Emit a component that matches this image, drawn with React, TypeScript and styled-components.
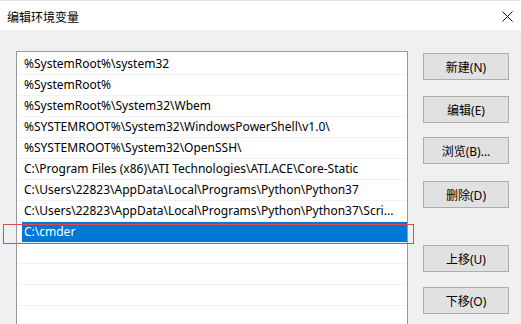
import React from 'react';
import styled, { createGlobalStyle } from 'styled-components';

const paths = [
  '%SystemRoot%\\system32',
  '%SystemRoot%',
  '%SystemRoot%\\System32\\Wbem',
  '%SYSTEMROOT%\\System32\\WindowsPowerShell\\v1.0\\',
  '%SYSTEMROOT%\\System32\\OpenSSH\\',
  'C:\\Program Files (x86)\\ATI Technologies\\ATI.ACE\\Core-Static',
  'C:\\Users\\22823\\AppData\\Local\\Programs\\Python\\Python37',
  'C:\\Users\\22823\\AppData\\Local\\Programs\\Python\\Python37\\Scri...',
  'C:\\cmder',
  '',
  '',
  '',
  '',
];

const SELECTED = 8;

const buttons = [
  { label: '新建(N)', gap: 0 },
  { label: '编辑(E)', gap: 16 },
  { label: '浏览(B)...', gap: 14 },
  { label: '删除(D)', gap: 17 },
  { label: '上移(U)', gap: 37 },
  { label: '下移(O)', gap: 15 },
];

export default function App() {
  return (
    <>
      <GlobalStyle />
      <Window>
        <TitleBar>
          <Title>编辑环境变量</Title>
          <CloseIcon width="11" height="11" viewBox="0 0 11 11">
            <path d="M0.5 0.5 L10.5 10.5 M10.5 0.5 L0.5 10.5" stroke="#111" strokeWidth="1" />
          </CloseIcon>
        </TitleBar>
        <Body>
          <ListBox>
            {paths.map((p, i) => (
              <Row key={i}>
                <RowText $selected={i === SELECTED}>{p}</RowText>
              </Row>
            ))}
          </ListBox>
          <ButtonColumn>
            {buttons.map((b) => (
              <Button key={b.label} $gap={b.gap}>{b.label}</Button>
            ))}
          </ButtonColumn>
        </Body>
        <Highlight />
      </Window>
    </>
  );
}

const GlobalStyle = createGlobalStyle`
  html, body {
    margin: 0;
    padding: 0;
    background: #f0f0f0;
  }
  body {
    font-family: "Noto Sans", "Noto Sans CJK SC", sans-serif;
    font-size: 12px;
  }
`;

const Window = styled.div`
  position: relative;
  width: 521px;
  height: 324px;
  overflow: hidden;
  display: flex;
  flex-direction: column;
  background: #f0f0f0;
  border-top: 1px solid #e3e3e3;
  box-sizing: border-box;
`;

const TitleBar = styled.div`
  height: 29px;
  flex: none;
  background: #fff;
  display: flex;
  align-items: center;
  justify-content: space-between;
  padding: 0 8px 0 7px;
`;

const Title = styled.div`
  font-family: "Noto Sans CJK SC", sans-serif;
  font-size: 12px;
  color: #000;
  margin-top: 1px;
`;

const CloseIcon = styled.svg`
  margin-top: 1px;
`;

const Body = styled.div`
  flex: 1;
  display: flex;
  gap: 15px;
  padding: 21px 0 0 16px;
  min-height: 0;
`;

const ListBox = styled.div`
  width: 392px;
  height: 300px;
  flex: none;
  background: #fff;
  border: 1px solid #9a9a9a;
  box-sizing: border-box;
  padding-top: 2px;
`;

const Row = styled.div`
  height: 21px;
  border-bottom: 1px solid #f2f2f2;
  box-sizing: border-box;
  padding: 0 0 0 5px;
  display: flex;
`;

const RowText = styled.div<{ $selected?: boolean }>`
  flex: 1;
  height: 20px;
  line-height: 20px;
  padding-left: 2px;
  white-space: nowrap;
  overflow: hidden;
  color: ${(p) => (p.$selected ? '#fff' : '#000')};
  background: ${(p) => (p.$selected ? '#0078d7' : 'transparent')};
`;

const ButtonColumn = styled.div`
  display: flex;
  flex-direction: column;
  padding-top: 2px;
`;

const Button = styled.div<{ $gap: number }>`
  width: 86px;
  height: 27px;
  margin-top: ${(p) => p.$gap}px;
  box-sizing: border-box;
  background: #e1e1e1;
  border: 1px solid #adadad;
  display: flex;
  align-items: center;
  justify-content: center;
  color: #000;
  font-family: "Noto Sans", "Noto Sans CJK SC", sans-serif;
  font-size: 12px;
`;

const Highlight = styled.div`
  position: absolute;
  left: 3px;
  top: 223px;
  width: 411px;
  height: 20px;
  border: 1px solid #e0484d;
  box-sizing: border-box;
  pointer-events: none;
`;
